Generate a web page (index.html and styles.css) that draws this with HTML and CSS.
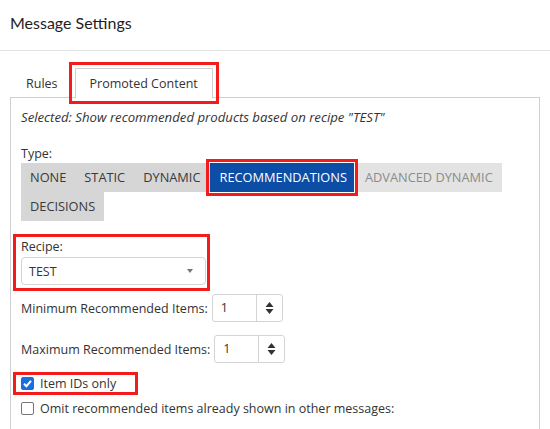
FILE: index.html
```html
<!DOCTYPE html>
<html>
<head>
<meta charset="utf-8">
<link rel="stylesheet" href="styles.css">
</head>
<body>
<header class="header"><h1 class="title">Message Settings</h1></header>
<div class="tabs-area">
  <div class="tabs">
    <div class="tab">Rules</div>
    <div class="tab tab-active">Promoted Content</div>
  </div>
  <div class="panel">
    <p class="selected">Selected: Show recommended products based on recipe "TEST"</p>
    <div class="label">Type:</div>
    <div class="btn-group">
      <span class="btn">NONE</span>
      <span class="btn">STATIC</span>
      <span class="btn">DYNAMIC</span>
      <span class="btn btn-on">RECOMMENDATIONS</span>
      <span class="btn btn-off">ADVANCED DYNAMIC</span>
      <span class="btn">DECISIONS</span>
    </div>
    <div class="recipe">
      <div class="label">Recipe:</div>
      <div class="select"><span>TEST</span><span class="caret"></span></div>
    </div>
    <div class="num-row num-min">
      <span class="num-label">Minimum Recommended Items:</span>
      <div class="spin"><span class="val">1</span><span class="arrows"><svg width="9" height="14" viewBox="0 0 9 14"><path d="M4.5 1 L8.5 6 H0.5 Z M4.5 13 L8.5 8 H0.5 Z" fill="#333"/></svg></span></div>
    </div>
    <div class="num-row num-max">
      <span class="num-label">Maximum Recommended Items:</span>
      <div class="spin"><span class="val">1</span><span class="arrows"><svg width="9" height="14" viewBox="0 0 9 14"><path d="M4.5 1 L8.5 6 H0.5 Z M4.5 13 L8.5 8 H0.5 Z" fill="#333"/></svg></span></div>
    </div>
    <div class="check check-hl"><span class="box box-on"><svg width="13" height="13" viewBox="0 0 13 13"><path d="M3 6.8 L5.4 9.2 L10 3.8" fill="none" stroke="#fff" stroke-width="2"/></svg></span><span>Item IDs only</span></div>
    <div class="check"><span class="box"></span><span>Omit recommended items already shown in other messages:</span></div>
  </div>
</div>
</body>
</html>
```
FILE: styles.css
```css
html, body { margin: 0; padding: 0; background: #fff; }
body {
  font-family: "Open Sans", Lato, sans-serif;
  font-size: 12.5px;
  color: #333;
  overflow: hidden;
  height: 429px;
}
.header {
  height: 50px;
  border-bottom: 1px solid #e3e3e3;
  padding-left: 10px;
}
.title {
  margin: 0;
  font-family: Lato, "Open Sans", sans-serif;
  font-size: 16px;
  font-weight: normal;
  line-height: 46px;
  color: #1e1e1e;
}
.tabs-area { margin: 17px 10px 0 10px; }
.tabs { display: flex; height: 30px; position: relative; z-index: 1; margin-bottom: -1px; }
.tab {
  padding: 0 14px 0 15px;
  line-height: 29px;
  border: 1px solid transparent;
  border-bottom: none;
  margin-right: 2px;
  color: #333;
}
.tab-active {
  background: #fff;
  border-color: #d0d0d0;
  height: 30px;
  box-sizing: border-box;
  outline: 3px solid #f21c1c;
  outline-offset: 3px;
  margin-left: 0;
  padding: 0 14px 0 14px;
}
.panel {
  border: 1px solid #d0d0d0;
  border-bottom: none;
  padding: 10px 10px 0 10px;
  height: 321px;
}
.selected {
  margin: 0;
  font-style: italic;
  font-size: 13.2px;
  line-height: 18px;
}
.label { line-height: 18px; }
.panel > .label { margin-top: 19px; }
.btn-group { display: flex; flex-wrap: wrap; font-size: 12.8px; }
.btn {
  height: 29px;
  line-height: 29px;
  padding: 0 9px;
  background: #d6d6d6;
  color: #3a3a3a;
}
.btn-on {
  background: #0c4da6;
  color: #fff;
  padding: 0 7px 0 10px;
  outline: 3px solid #f21c1c;
  outline-offset: 1px;
  position: relative;
  z-index: 1;
}
.btn-off { background: #e3e3e3; color: #8b8b8b; margin-left: 2px; }
.recipe {
  margin: 13px 0 0 -8px;
  border: 3px solid #f21c1c;
  padding: 1px 1px 3px 5px;
  width: 185px;
}
.select {
  margin-top: 1px;
  height: 28px;
  box-sizing: border-box;
  border: 1px solid #d4d4d4;
  border-radius: 4px;
  display: flex;
  align-items: center;
  justify-content: space-between;
  padding: 0 10px 0 7px;
}
.caret {
  width: 0; height: 0;
  border-left: 3px solid transparent;
  border-right: 3px solid transparent;
  border-top: 4px solid #777;
  margin-right: 2px;
}
.num-row { display: flex; align-items: center; }
.num-min { margin-top: 3px; }
.num-max { margin-top: 13px; }
.num-label { margin-right: 4px; }
.spin {
  display: flex;
  width: 71px;
  height: 28px;
  box-sizing: border-box;
  border: 1px solid #d4d4d4;
  border-radius: 3px;
}
.val { flex: 1; line-height: 26px; padding-left: 8px; }
.arrows {
  width: 25px;
  border-left: 1px solid #d4d4d4;
  display: flex;
  align-items: center;
  justify-content: center;
}
.check { display: flex; align-items: center; line-height: 17px; }
.check-hl {
  margin: 9px 0 0 -8px;
  border: 3px solid #f21c1c;
  padding: 0 0 0 5px;
  width: 114px;
}
.box {
  width: 13px; height: 13px;
  box-sizing: border-box;
  border: 1px solid #767676;
  border-radius: 2px;
  margin-right: 6px;
  background: #fff;
  display: flex;
}
.box-on { background: #1a6fe0; border-color: #1a6fe0; }
.box-on svg { margin: -1px; }
.check + .check { margin-top: 5px; }
```
